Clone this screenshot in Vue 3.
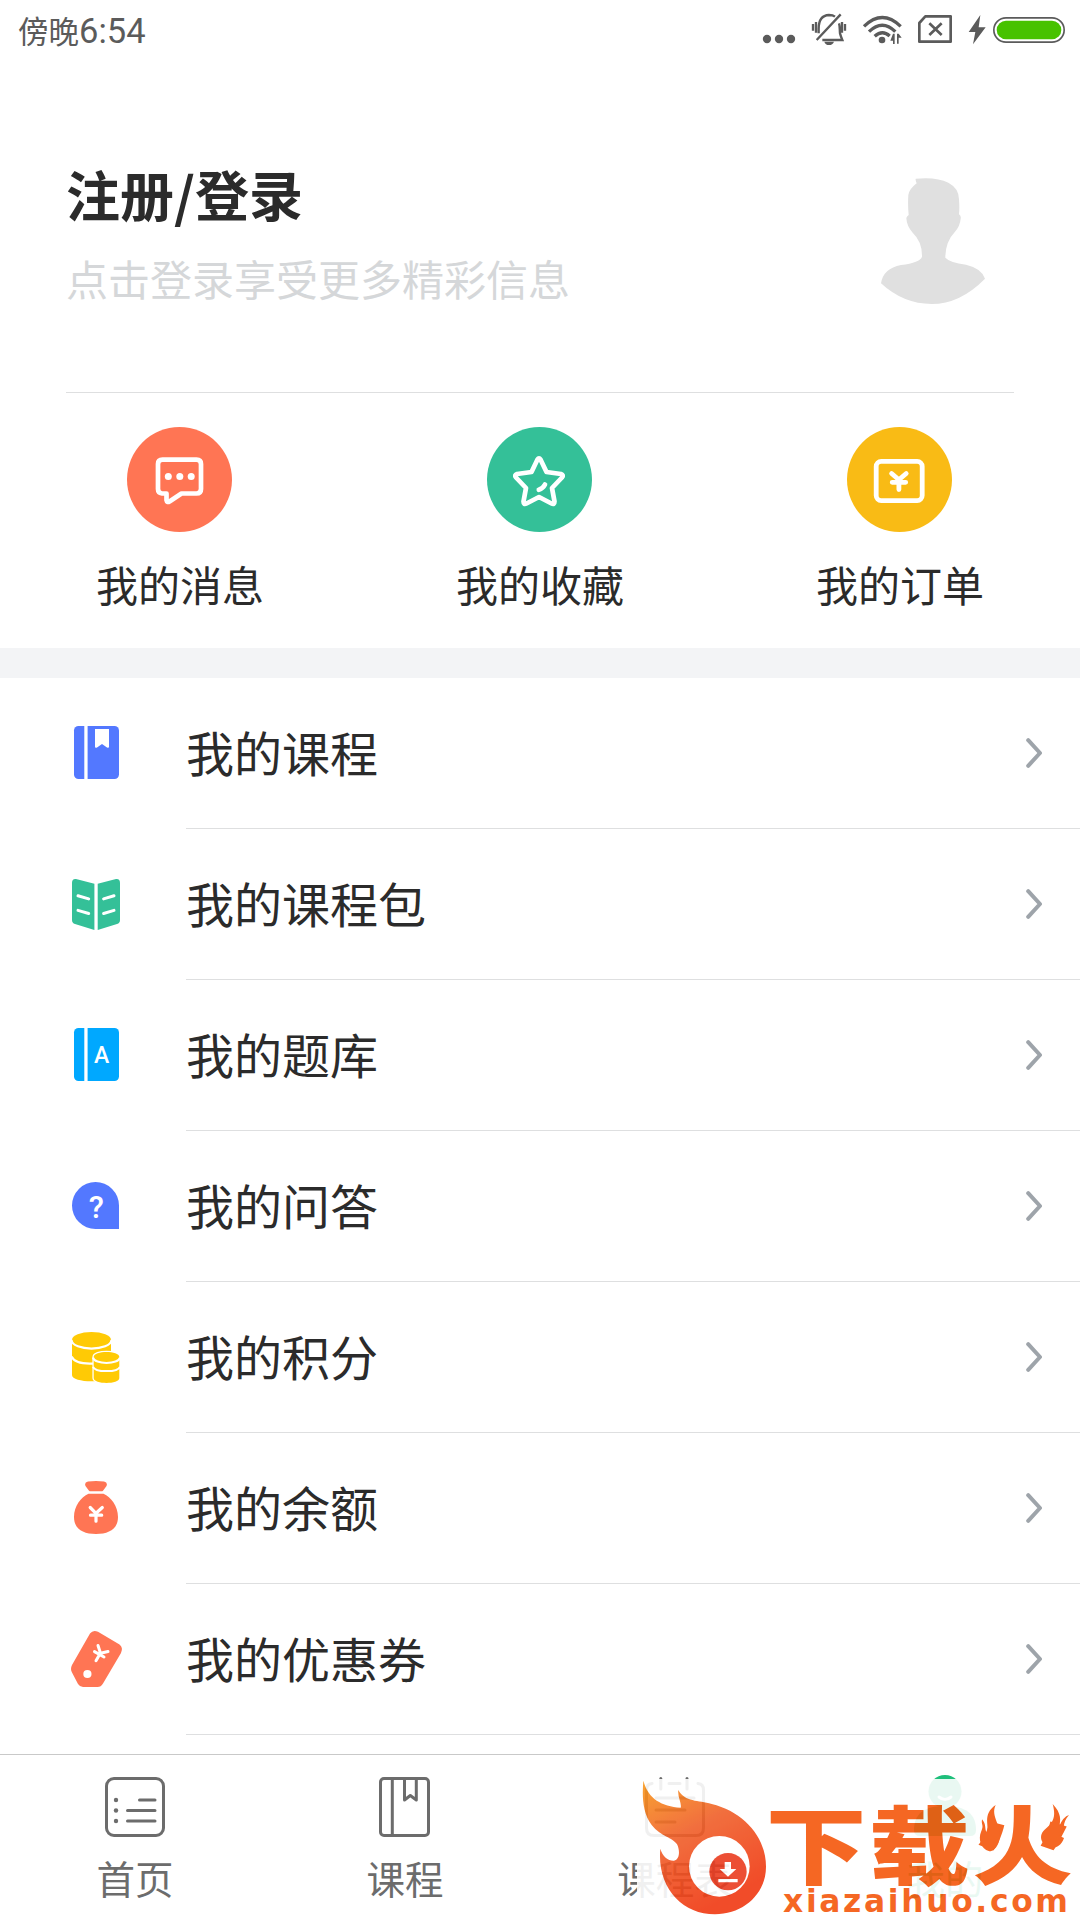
<script setup>
const rows = [
  { icon: 'course', label: '我的课程' },
  { icon: 'pack', label: '我的课程包' },
  { icon: 'bank', label: '我的题库' },
  { icon: 'qa', label: '我的问答' },
  { icon: 'points', label: '我的积分' },
  { icon: 'balance', label: '我的余额' },
  { icon: 'coupon', label: '我的优惠券' },
]
</script>

<template>
  <div class="screen">
    <header class="status">
      <div class="clock"><span>傍晚</span><span class="digits">6:54</span></div>
      <svg class="status-icons" width="340" height="70" viewBox="0 0 1020 210" fill="#5b5b5b">
        <circle cx="81" cy="117" r="12.5" /><circle cx="117" cy="117" r="12.5" /><circle cx="153" cy="117" r="12.5" />
        <g fill="none" stroke="#5b5b5b" stroke-width="7">
          <path d="M230 120L302 43M236 100V86C236 60 248 46 267 45C274 45 280 46 285 50M297 70C300 78 299 92 300 100Q303 111 307 120H247M228 66V98M219 72V92M306 66V98M315 72V92" />
        </g>
        <path d="M253 125H282Q278 135 267 135T253 125Z" />
        <g fill="none" stroke="#5b5b5b" stroke-width="10">
          <path d="M372 79Q427 26 482 79M387 95Q427 56 466 95M404 109Q427 88 449 108" />
        </g>
        <circle cx="426" cy="120" r="10" />
        <path d="M459 101h5v31h-5v-10h-8zM471 101h5l9 12h-9v18h-5z" />
        <path d="M556 49H632V125H538V69Z" fill="none" stroke="#5b5b5b" stroke-width="8" stroke-linejoin="round" />
        <path d="M568 70L605 105M605 70L568 105" fill="none" stroke="#5b5b5b" stroke-width="8" />
        <path d="M721 45L686 96H706L699 133L737 82H716Z" />
        <rect x="761.5" y="53.500" width="211" height="73" rx="36.500" fill="#fff" stroke="#5b5b5b" stroke-width="5" />
        <rect x="770" y="62" width="194" height="56" rx="28" fill="#47c200" />
      </svg>
    </header>

    <section class="profile">
      <div class="who">
        <h1>注册/登录</h1>
        <p>点击登录享受更多精彩信息</p>
      </div>
      <svg class="avatar" width="104" height="126" viewBox="123 84 312 378">
        <path fill="#e0e0e0" d="M227 86Q290 80 325 98Q357 115 357 148Q359 175 357 193Q364 198 362 206Q360 228 345 245Q316 275 316 323Q330 338 378 344Q425 355 435 386Q360 462 275 462Q190 462 123 400Q130 355 183 345Q240 338 246 320Q247 275 218 248Q200 228 199 204Q200 200 206 195Q203 165 205 135Q207 118 230 100Q226 92 227 86Z" />
      </svg>
    </section>

    <nav class="quick">
      <div class="quick-item">
        <svg width="105" height="105" viewBox="0 0 105 105" fill="none" stroke="#fff" stroke-width="4.700" stroke-linejoin="round">
          <circle cx="52.500" cy="52.500" r="52.500" fill="#ff7554" stroke="none" />
          <path d="M39.500 66.500H35Q31 66 31 62V37Q31 32.700 35.500 32.700H69.500Q74 32.700 74 37V62Q74 66.500 69.500 66.500H54.500L42.500 74.500Q40 76 39.500 73Z" />
          <g fill="#fff" stroke="none"><circle cx="41.300" cy="49.600" r="3.500" /><circle cx="52.800" cy="49.600" r="3.500" /><circle cx="64.200" cy="49.600" r="3.500" /></g>
        </svg>
        <span>我的消息</span>
      </div>
      <div class="quick-item">
        <svg width="105" height="105" viewBox="0 0 105 105" fill="none" stroke="#fff" stroke-width="4.700" stroke-linejoin="round" stroke-linecap="round">
          <circle cx="52.500" cy="52.500" r="52.500" fill="#34c098" stroke="none" />
          <path d="M50.500 32.500Q52 30 53.500 32.500L59.500 45L74 47Q77 48 75 50.500L65 61L67.500 74.500Q67.500 78 64.500 76.500L52 70L39.500 76.500Q36.500 78 36.500 74.500L39 61L29 50.500Q27 48 30 47L44.500 45Z" />
          <path d="M58 57.500Q56 61.500 51.800 62.800" />
        </svg>
        <span>我的收藏</span>
      </div>
      <div class="quick-item">
        <svg width="105" height="105" viewBox="0 0 105 105" fill="none" stroke="#fff" stroke-width="4.800" stroke-linejoin="round" stroke-linecap="round">
          <circle cx="52.500" cy="52.500" r="52.500" fill="#f9bb15" stroke="none" />
          <rect x="29.200" y="34.400" width="46" height="39.200" rx="5" />
          <path d="M44.600 46.500L51.900 52.800L59.200 46.500M51.900 53V62.500M45.200 55.300H58.700" />
        </svg>
        <span>我的订单</span>
      </div>
    </nav>

    <div class="band"></div>

    <main class="list">
      <div v-for="row in rows" :key="row.icon" class="row">
        <svg class="row-icon" width="56" height="60" viewBox="0 0 56 60">
          <g v-if="row.icon === 'course'">
            <rect x="6" y="3" width="45" height="53" rx="4.500" fill="#5378ff" />
            <path d="M16.300 3h3.300v53h-3.300zM27 6H41V23.500Q41 25.500 39 24.500L34 21L29 24.500Q27 25.500 27 23.500Z" fill="#fff" />
          </g>
          <g v-else-if="row.icon === 'pack'">
            <path d="M26.400 9.800L8 5Q4 4.500 4 9V46Q4 49 7 50L26.400 56ZM29.700 9.800L48 5Q52 4.500 52 9V46Q52 49 49 50L29.700 56Z" fill="#34c098" />
            <path d="M10 21.800L20.700 24.900M10 36.400L20.700 39.500M35.600 24.900L46 21.800M35.600 39.500L46 36.400" stroke="#fff" stroke-width="3" stroke-linecap="round" />
          </g>
          <g v-else-if="row.icon === 'bank'">
            <rect x="6" y="3" width="45" height="53" rx="4.500" fill="#00a8ff" />
            <path d="M16.300 3h3.300v53h-3.300z" fill="#fff" />
            <text class="glyph medium" x="33.700" y="37.500" font-size="23">A</text>
          </g>
          <g v-else-if="row.icon === 'qa'">
            <path d="M27.500 6A23.500 23.500 0 0 1 51 29.500V53H27.500A23.500 23.500 0 0 1 27.500 6Z" fill="#5378ff" />
            <text class="glyph medium" x="28.300" y="42.200" font-size="31">?</text>
          </g>
          <g v-else-if="row.icon === 'points'">
            <path d="M4 12.500V48C4 52 13 54.300 23.500 54.300S43 52 43 48V12.500Z" fill="#ffca05" />
            <ellipse cx="23.500" cy="12.700" rx="19.500" ry="7.800" fill="#ffca05" />
            <path d="M3.500 12.700C4 24.500 43 24.500 43.500 12.700M3.500 29.500C6 35 15 37.200 27 36.400" fill="none" stroke="#fff" stroke-width="2.200" />
            <path d="M25.700 30C25.700 23.400 51.300 23.400 51.300 30V51C51.300 57.600 25.700 57.600 25.700 51Z" fill="#ffca05" stroke="#fff" stroke-width="2.600" paint-order="stroke" />
            <path d="M25 30.500C26 37.700 51 37.700 52 30.500M25 39.800C27 45.500 50 45.500 52 39.800" fill="none" stroke="#fff" stroke-width="2" />
          </g>
          <g v-else-if="row.icon === 'balance'">
            <path d="M20 3.500Q28 2.300 36 3.500Q40 4.500 38.500 8L35 12.700Q34.500 13.300 33 13.300H23Q21.500 13.300 21 12.700L17.500 8Q16 4.500 20 3.500ZM20.500 15.700H35.500C43 19 50 28 50 39C50 51 41 56 28 56S6 51 6 39C6 28 13 19 20.500 15.700Z" fill="#ff7554" />
            <path d="M22.200 29.500L28 35.300L34.300 29.500M28 36V43.200M22.500 37.200H33.700" fill="none" stroke="#fff" stroke-width="3.200" stroke-linecap="round" stroke-linejoin="round" />
          </g>
          <g v-else>
            <path d="M22 4.500Q25 .5 30 2.800L51.500 15.500Q55.500 18.500 53 24L35 54.500Q33 58 29.500 58H15Q12 58 10 55L4 43.500Q2 40 4 36Z" fill="#ff7554" />
            <circle cx="19.400" cy="45" r="4.100" fill="#fff" />
            <path d="M30 16.500L32.500 24.300L40 22.500M32.300 24.300L28 31.800M26.500 22.600L36 28" fill="none" stroke="#fff" stroke-width="3" stroke-linecap="round" stroke-linejoin="round" />
          </g>
        </svg>
        <div class="row-body">
          <span>{{ row.label }}</span>
          <svg width="16" height="30" viewBox="0 0 16 30"><path d="M2.200 2.200L14 15L2.200 27.800" fill="none" stroke="#9ea4aa" stroke-width="4" stroke-linecap="round" stroke-linejoin="round" /></svg>
        </div>
      </div>
    </main>

    <footer class="tabs">
      <div class="tab">
        <svg width="60" height="60" viewBox="0 0 60 60" fill="none" stroke="#6c6c6c" stroke-width="3" stroke-linecap="round">
          <rect x="1.500" y="1.500" width="57" height="57" rx="7.500" />
          <path d="M34.500 23H50M22.500 33.500H50M22.500 44H50" />
          <g fill="#6c6c6c" stroke="none"><circle cx="11" cy="23" r="2.200" /><circle cx="11" cy="33.500" r="2.200" /><circle cx="11" cy="44" r="2.200" /></g>
        </svg>
        <span>首页</span>
      </div>
      <div class="tab">
        <svg width="60" height="60" viewBox="0 0 60 60" fill="none" stroke="#6c6c6c" stroke-width="3" stroke-linejoin="round">
          <rect x="5.500" y="1.500" width="48" height="57" rx="3.500" />
          <path d="M17.300 2V58M29.500 2V23L35.300 18.500L41.300 23V2" />
        </svg>
        <span>课程</span>
      </div>
      <div class="tab">
        <svg width="60" height="60" viewBox="0 0 60 60" fill="none" stroke="#6c6c6c" stroke-width="3" stroke-linecap="round">
          <path d="M7 6.500Q1.500 7 1.500 13V51Q1.500 58.500 9 58.500H51Q58.500 58.500 58.500 51V13Q58.500 7 53 6.500M15.800 1.500V12M42 1.500V12M24 6.500H35M11 21H49M11 33H40M11 45H30" />
        </svg>
        <span>课程表</span>
      </div>
      <div class="tab active">
        <svg width="64" height="62" viewBox="0 0 64 62">
          <path d="M1 55C1 39 11 31 32 31S63 39 63 55Q63 61 57 61H7Q1 61 1 55Z" fill="#1fbf7b" />
          <circle cx="32" cy="16.500" r="16.500" fill="#1fbf7b" />
          <path d="M26 22Q32 27 38 22" fill="none" stroke="#fff" stroke-width="3" stroke-linecap="round" />
        </svg>
        <span>我的</span>
      </div>

      <svg class="mark" width="443" height="141" viewBox="111 117 1329 423">
        <defs>
          <linearGradient id="blaze" x1="130" y1="122" x2="330" y2="500" gradientUnits="userSpaceOnUse">
            <stop offset="0" stop-color="#f99a1c" /><stop offset=".45" stop-color="#f0602a" /><stop offset="1" stop-color="#f03912" />
          </linearGradient>
        </defs>
        <rect x="111" y="117" width="1329" height="423" fill="#fff" />
        <path fill="url(#blaze)" d="M130 122C145 178 185 198 242 203C246 190 232 172 235 150C255 187 295 180 335 192C430 215 498 290 498 380C498 462 430 523 345 523C245 523 170 440 181 326C188 350 205 363 222 362C240 358 240 330 231 313C218 292 183 290 155 255C125 215 127 160 130 122Z" />
        <circle cx="358" cy="379" r="91" fill="#fff" />
        <circle cx="384" cy="395" r="56" fill="#ea3c20" />
        <path fill="#fff" d="M374 366H393V387H409L384 410L359 387H374ZM355 417H413V427H355Z" />
        <g fill="#f4570c">
          <text class="mark-name" x="497 807 1117" y="488" transform="scale(1 .85)">下载火</text>
          <path d="M1187 195C1170 230 1207 255 1198 300C1192 325 1178 334 1168 334C1140 325 1135 295 1143 276C1153 255 1143 255 1146 238C1160 255 1153 265 1160 278C1170 255 1145 225 1187 195Z" />
          <path d="M1358 192C1385 220 1382 242 1378 258Q1390 230 1407 225C1385 250 1394 267 1390 276L1379 288L1392 294C1385 315 1370 323 1358 323C1325 318 1313 290 1333 270C1357 250 1370 235 1358 192Z" />
          <text class="mark-url" x="549" y="515" textLength="855" lengthAdjust="spacing">xiazaihuo.com</text>
        </g>
      </svg>
    </footer>
  </div>
</template>

<style>
body { margin: 0; background: #fff; }
</style>

<style scoped>
.screen {
  width: 1080px;
  height: 1920px;
  overflow: hidden;
  display: flex;
  flex-direction: column;
  background: #fff;
  color: #2b2b2b;
  font-family: "Noto Sans CJK SC", "Noto Sans", sans-serif;
}
.status {
  height: 70px;
  flex: none;
  display: flex;
  justify-content: space-between;
  color: #5b5b5b;
}
.clock {
  padding-left: 18px;
  display: flex;
  align-items: baseline;
  font-size: 30.500px;
  line-height: 60px;
}
.digits { font-family: Roboto, sans-serif; font-size: 34.500px; }
.profile {
  height: 322px;
  flex: none;
  margin: 0 66px;
  border-bottom: 1px solid #dedfe0;
  display: flex;
  justify-content: space-between;
}
.who { padding-top: 84px; }
h1 { margin: 0; font-size: 54px; line-height: 80px; font-weight: 700; }
p { margin: 14px 0 0; font-size: 42px; line-height: 60px; color: #d5d7d9; }
.avatar { margin: 108px 29px 0 0; }
.quick { height: 255px; flex: none; display: flex; }
.quick-item {
  flex: 1;
  display: flex;
  flex-direction: column;
  align-items: center;
  padding-top: 34px;
  font-size: 42px;
  line-height: 60px;
}
.quick-item svg { margin-right: 1px; }
.quick-item span { margin-top: 22px; }
.band { height: 30px; flex: none; background: #f3f4f6; }
.list { height: 1076px; flex: none; }
.row { height: 151px; display: flex; }
.row-icon { margin: 45px 62px 0 68px; flex: none; }
.row-body {
  flex: 1;
  display: flex;
  align-items: center;
  justify-content: space-between;
  padding-right: 38px;
  border-bottom: 1px solid #dedfe0;
  font-size: 48px;
  line-height: 70px;
}
.row-body span { padding-bottom: 5px; }
.glyph { font-family: Roboto, sans-serif; font-weight: 700; text-anchor: middle; fill: #fff; }
.glyph.medium { font-weight: 500; }
.tabs {
  position: relative;
  height: 165px;
  flex: none;
  border-top: 1px solid #c9c9c9;
  display: flex;
}
.tab {
  flex: 1;
  display: flex;
  flex-direction: column;
  align-items: center;
  padding-top: 22px;
  font-size: 38.500px;
  line-height: 56px;
  color: #6c6c6c;
}
.tab span { margin-top: 12px; }
.tab.active { padding-top: 20px; color: #1fbf7b; }
.mark { position: absolute; left: 637px; top: 24px; opacity: .9; }
.mark-name { font-family: "Noto Sans CJK SC", sans-serif; font-weight: 900; font-size: 302px; }
.mark-url { font-family: "DejaVu Sans", sans-serif; font-weight: 700; font-size: 94px; }
</style>
